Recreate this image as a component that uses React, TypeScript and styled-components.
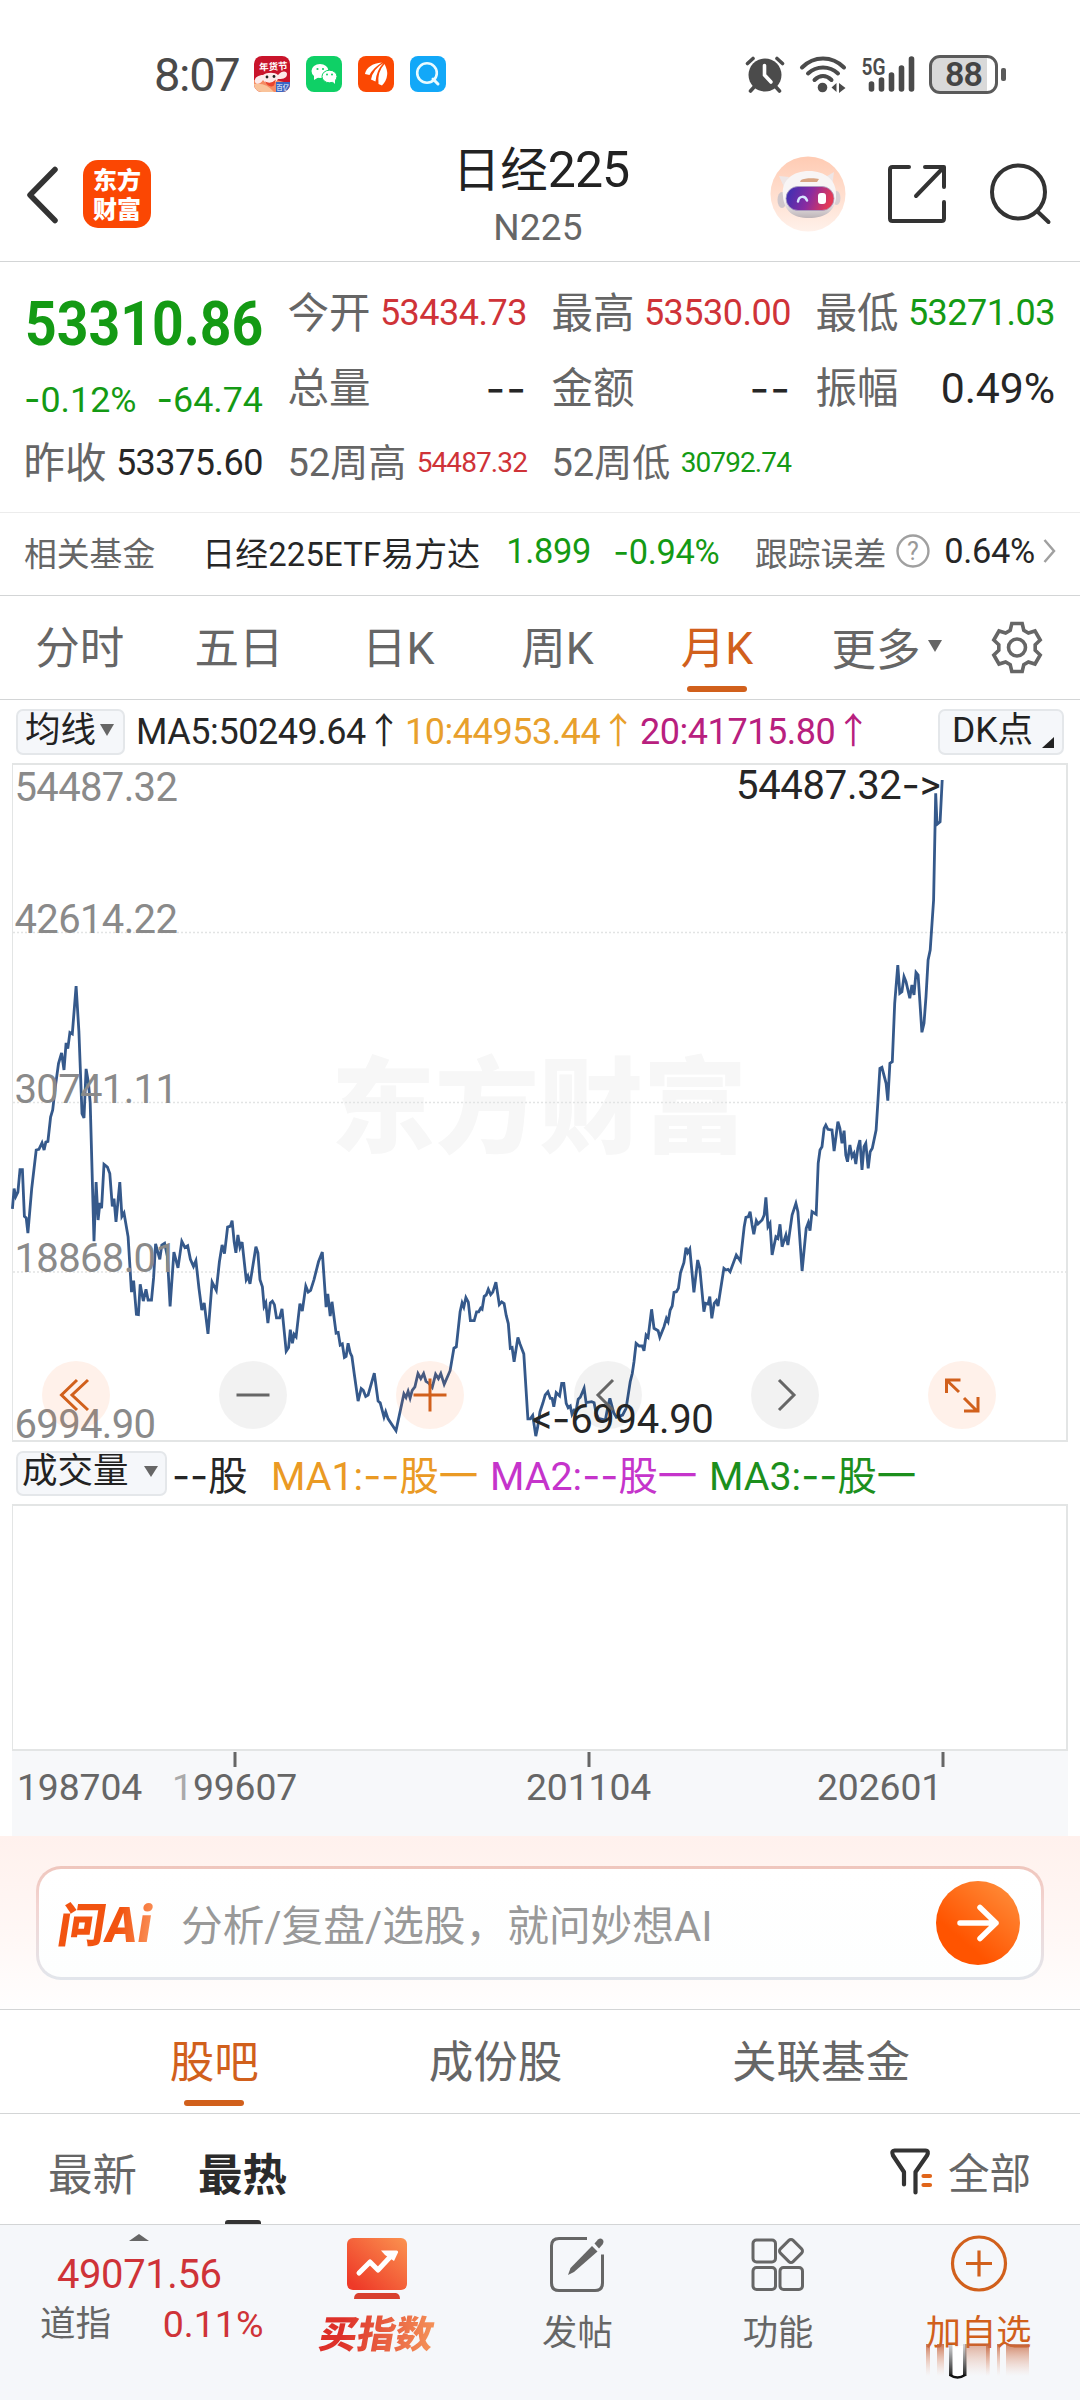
import React from 'react';
import styled, { createGlobalStyle } from 'styled-components';

const sans = `Roboto, 'Noto Sans CJK SC', sans-serif`;
const cjk = `'Noto Sans CJK SC', sans-serif`;

const C = {
  green: '#149a14',
  red: '#cf3338',
  orange: '#d1601c',
  ink: '#262626',
  grey: '#666666',
  line: '#d3d5d6',
};

const Global = createGlobalStyle`
  * { box-sizing: border-box; }
  body { margin: 0; background: #fff; font-family: ${sans}; color: ${C.ink}; }
`;

const Screen = styled.main`
  width: 1080px;
  height: 2400px;
  display: flex;
  flex-direction: column;
  overflow: hidden;
  background: #fff;
  white-space: nowrap;
`;

const Dash = styled.span`
  font-family: Inter, sans-serif;
`;

function Num({ children }: { children: string }) {
  return (
    <>
      {children.split(/(-+)/).map((part, i) => (part.startsWith('-') ? <Dash key={i}>{part}</Dash> : part))}
    </>
  );
}

/* ---------- status bar ---------- */

const StatusBar = styled.div`
  height: 148px;
  padding: 0 74px 0 154px;
  display: flex;
  align-items: center;
  justify-content: space-between;
`;

const StatusGroup = styled.div<{ $gap: number }>`
  display: flex;
  align-items: center;
  gap: ${(p) => p.$gap}px;
`;

const Clock = styled.span`
  width: 84px;
  font-size: 47px;
  line-height: 47px;
  letter-spacing: -1.3px;
  color: #4a4a4a;
`;

const AppTile = styled.svg`
  width: 36px;
  height: 36px;
  border-radius: 8px;
  display: block;
`;

const Battery = styled.div`
  position: relative;
  width: 69px;
  height: 39px;
  margin-right: 8px;
  border: 3px solid #5a5a5a;
  border-radius: 11px;
  background: linear-gradient(90deg, #d9d9d9 88%, #fff 88%);
  display: flex;
  align-items: center;
  justify-content: center;
  font-size: 34px;
  line-height: 33px;
  font-weight: 600;
  letter-spacing: -1px;
  color: #444;
  &::after {
    content: '';
    position: absolute;
    right: -11px;
    top: 10px;
    width: 5px;
    height: 13px;
    border-radius: 2px;
    background: #5a5a5a;
  }
`;

/* ---------- header ---------- */

const Header = styled.header`
  height: 114px;
  border-bottom: 1px solid ${C.line};
  display: grid;
  grid-template-columns: 400px 280px 400px;
`;

const HeaderLeft = styled.div`
  display: flex;
  padding: 12px 0 0 26px;
  gap: 24px;
`;

const BrandTile = styled.div`
  width: 68px;
  height: 68px;
  border-radius: 15px;
  background: #fb4703;
  color: #fff;
  font: 900 24px/29px ${cjk};
  text-align: center;
  padding-top: 4px;
  white-space: pre-line;
`;

const TitleBlock = styled.div`
  display: flex;
  flex-direction: column;
  align-items: center;
`;

const Title = styled.h1`
  margin: -9px 0 0 2px;
  font-size: 47.5px;
  font-weight: 400;
  line-height: 62px;
  color: #222;
`;

const TitleDigits = styled.span`
  font-size: 50px;
  letter-spacing: -1px;
`;

const Subtitle = styled.div`
  margin: 4px 4px 0 0;
  font-size: 37px;
  line-height: 44px;
  letter-spacing: 0.2px;
  color: ${C.grey};
`;

const HeaderRight = styled.div`
  display: flex;
  align-items: flex-start;
  justify-content: flex-end;
  padding: 8px 28px 0 0;
`;

/* ---------- quote ---------- */

const Quote = styled.section`
  height: 251px;
  padding: 12px 24px 0 25px;
  border-bottom: 1px solid #ececec;
  display: grid;
  grid-template-columns: repeat(4, 238px);
  grid-template-rows: repeat(3, 75px);
  column-gap: 26px;
`;

const PriceCell = styled.div`
  grid-row: span 2;
  display: flex;
  flex-direction: column;
  color: ${C.green};
`;

const Price = styled.div`
  margin-top: 13px;
  height: 73px;
  font-size: 62px;
  line-height: 73px;
  font-weight: 700;
  transform: scaleX(0.892);
  transform-origin: 0 50%;
`;

const ChangeRow = styled.div`
  margin: 19px 0 0 -1px;
  display: flex;
  justify-content: space-between;
  font-size: 35.8px;
  line-height: 41px;
`;

const StatCell = styled.div`
  display: flex;
  align-items: center;
  justify-content: space-between;
`;

const StatLabel = styled.span<{ $size?: number }>`
  margin: -4px 0 0 -1.5px;
  font-size: ${(p) => p.$size ?? 41.5}px;
  color: ${C.grey};
`;

const StatValue = styled.span<{ $size?: number; $color?: string; $ls?: number }>`
  margin-top: 2px;
  font-size: ${(p) => p.$size ?? 36}px;
  letter-spacing: ${(p) => p.$ls ?? -0.5}px;
  color: ${(p) => p.$color ?? C.ink};
`;

/* ---------- related fund ---------- */

const FundRow = styled.section`
  height: 83px;
  padding: 0 24px 6px 24px;
  border-bottom: 1px solid ${C.line};
  display: flex;
  align-items: center;
  font-size: 32.8px;
  color: ${C.ink};
`;

const FundLabel = styled.span`
  color: ${C.grey};
`;

const FundName = styled.span`
  margin-left: 47px;
  width: 276px;
  letter-spacing: 0.2px;
`;

const FundNum = styled.span<{ $w: number; $color?: string; $ml: number }>`
  width: ${(p) => p.$w}px;
  margin-left: ${(p) => p.$ml}px;
  font-size: 34.4px;
  letter-spacing: -0.3px;
  color: ${(p) => p.$color ?? C.ink};
`;

/* ---------- period tabs ---------- */

const PeriodBar = styled.nav`
  height: 104px;
  border-bottom: 1px solid ${C.line};
  display: flex;
`;

const PeriodTab = styled.div<{ $active?: boolean }>`
  width: 159.3px;
  display: flex;
  flex-direction: column;
  align-items: center;
  font-size: 44.5px;
  line-height: 52px;
  padding-top: 27px;
  color: ${(p) => (p.$active ? C.orange : C.grey)};
  &::after {
    content: '';
    width: 60px;
    height: 6px;
    margin-top: 11px;
    border-radius: 3px;
    background: ${(p) => (p.$active ? C.orange : 'transparent')};
  }
`;

const MoreTab = styled.div`
  display: flex;
  align-items: center;
  gap: 7px;
  height: 52px;
  margin: 24px 0 0 35px;
  width: 159px;
  font-size: 44.5px;
  color: ${C.grey};
`;

const Caret = styled.i<{ $w: number; $h: number; $up?: boolean }>`
  display: block;
  width: 0;
  height: 0;
  border: solid transparent;
  border-width: ${(p) => (p.$up ? `0 ${p.$w / 2}px ${p.$h}px` : `${p.$h}px ${p.$w / 2}px 0`)};
  border-${(p) => (p.$up ? 'bottom' : 'top')}-color: ${C.grey};
`;

/* ---------- indicator rows ---------- */

const IndicatorRow = styled.div<{ $h: number }>`
  height: ${(p) => p.$h}px;
  padding: 0 16px;
  display: flex;
  align-items: center;
`;

const Chip = styled.div<{ $w: number; $h: number; $pad: number; $gap: number }>`
  width: ${(p) => p.$w}px;
  height: ${(p) => p.$h}px;
  padding-left: ${(p) => p.$pad}px;
  padding-bottom: 3px;
  display: flex;
  align-items: center;
  gap: ${(p) => p.$gap}px;
  border: 2px solid #e4e7ea;
  border-radius: 7px;
  background: #f5f7fa;
  font-size: 35.5px;
  line-height: 39px;
  color: #222;
`;

const Corner = styled.i`
  align-self: flex-end;
  width: 0;
  height: 0;
  margin-bottom: 2px;
  border-left: 12px solid transparent;
  border-bottom: 11px solid #222;
`;

const Average = styled.span<{ $color: string; $ml: number; $w: number }>`
  width: ${(p) => p.$w}px;
  margin-left: ${(p) => p.$ml}px;
  font-size: 36px;
  letter-spacing: -0.45px;
  color: ${(p) => p.$color};
`;

const Up = styled.span`
  font-family: ${cjk};
  line-height: 1;
`;

const Volume = styled.span<{ $color: string; $ml: number; $w: number }>`
  width: ${(p) => p.$w}px;
  margin: -2px 0 0 ${(p) => p.$ml}px;
  font-size: 39.4px;
  color: ${(p) => p.$color};
`;

/* ---------- chart ---------- */

const ChartBox = styled.div`
  position: relative;
  height: 679px;
  margin: 0 12px;
  border: 2px solid #e3e5e5;
  border-left-width: 1px;
`;

const ChartSvg = styled.svg`
  position: absolute;
  left: -13px;
  top: -2px;
  display: block;
  overflow: visible;
  font-family: ${sans};
`;

const ChartTools = styled.div`
  position: absolute;
  left: 29px;
  top: 596px;
  display: flex;
  gap: 109.2px;
`;

const ToolButton = styled.button<{ $warm?: boolean }>`
  width: 68px;
  height: 68px;
  padding: 0;
  border: 0;
  border-radius: 50%;
  background: ${(p) => (p.$warm ? 'rgba(255, 96, 24, 0.09)' : 'rgba(0, 0, 0, 0.05)')};
  svg {
    display: block;
    fill: none;
    stroke: ${(p) => (p.$warm ? C.orange : C.grey)};
    stroke-width: 3;
  }
`;

const VolumeBox = styled.div`
  height: 247px;
  margin: 0 12px;
  border: 2px solid #e3e5e5;
  border-left-width: 1px;
`;

const Axis = styled.div`
  height: 85px;
  margin: 0 12px;
  background: #f7f8fa;
  svg { display: block; }
`;

/* ---------- AI prompt ---------- */

const AskSection = styled.section`
  height: 174px;
  padding: 30px 36px 0;
  border-bottom: 1px solid ${C.line};
  background: linear-gradient(180deg, #fff1ed 0%, #fff8f6 60%, #fffefe 100%);
`;

const AskBox = styled.div`
  height: 114px;
  padding: 0 21px 0 20px;
  display: flex;
  align-items: center;
  border: 3px solid transparent;
  border-radius: 25px;
  background:
    linear-gradient(#fff, #fdfefe) padding-box,
    linear-gradient(180deg, #efc6bd 0%, #f3d5d2 35%, #e2e6ec 100%) border-box;
`;

const AskLogo = styled.div`
  width: 100px;
  height: 52px;
  margin-right: 22px;
  font: 900 47px/50px ${cjk};
  letter-spacing: 0.5px;
  color: transparent;
  background: linear-gradient(90deg, #f25310 60%, #fb9a63);
  background-clip: text;
  -webkit-background-clip: text;
  transform: skewX(-9deg);
`;

const AskHint = styled.span`
  flex: 1;
  font-size: 41.7px;
  color: #999;
`;

const AskSend = styled.svg`
  display: block;
`;

/* ---------- content tabs ---------- */

const ContentTabs = styled.nav`
  height: 104px;
  border-bottom: 1px solid ${C.line};
  display: flex;
  justify-content: space-evenly;
`;

const ContentTab = styled(PeriodTab)`
  width: auto;
`;

const SortBar = styled.div`
  height: 111px;
  padding: 0 49px 0 48px;
  border-bottom: 1px solid ${C.line};
  display: flex;
`;

const SortTab = styled.div<{ $active?: boolean }>`
  margin-right: 61px;
  height: 110px;
  overflow: hidden;
  display: flex;
  flex-direction: column;
  align-items: center;
  padding-top: 36px;
  font-size: 44.5px;
  line-height: 52px;
  font-weight: ${(p) => (p.$active ? 700 : 400)};
  color: ${(p) => (p.$active ? '#2b2b2b' : C.grey)};
  &::after {
    content: '';
    flex: none;
    width: 36px;
    height: 8px;
    margin-top: 18px;
    border-radius: 3px;
    background: ${(p) => (p.$active ? '#333' : 'transparent')};
  }
`;

const Filter = styled.div`
  margin-left: auto;
  height: 110px;
  padding-top: 4px;
  display: flex;
  align-items: center;
  gap: 15px;
  font-size: 41.5px;
  color: ${C.grey};
`;

/* ---------- bottom bar ---------- */

const BottomBar = styled.footer`
  flex: 1;
  background: #f5f7fa;
  display: grid;
  grid-template-columns: 276.5px repeat(4, 200.6px);
`;

const IndexCell = styled.div`
  padding: 9px 13px 0 40px;
  display: flex;
  flex-direction: column;
  align-items: center;
  color: ${C.red};
`;

const IndexCaret = styled(Caret)`
  margin-right: 26px;
`;

const IndexValue = styled.div`
  margin: 10px 25px 0 0;
  font-size: 40px;
  line-height: 47px;
  letter-spacing: -0.4px;
`;

const IndexRow = styled.div`
  align-self: stretch;
  margin-top: 2px;
  display: flex;
  align-items: center;
  justify-content: space-between;
  font-size: 37.6px;
  line-height: 48px;
`;

const IndexName = styled.span`
  font-size: 35.5px;
  color: ${C.grey};
`;

const Action = styled.div<{ $active?: boolean }>`
  padding-top: 10px;
  display: flex;
  flex-direction: column;
  align-items: center;
  font-size: 35.3px;
  line-height: 42px;
  color: ${(p) => (p.$active ? C.orange : C.grey)};
  position: relative;
  svg { display: block; flex: none; }
`;

const ActionText = styled.span`
  margin-top: 15px;
`;

const BuyText = styled.span`
  margin-top: 9px;
  padding: 0 3px;
  font: 900 38px/44px ${cjk};
  color: transparent;
  background: linear-gradient(90deg, #dd3029 20%, #f5955a 100%);
  background-clip: text;
  -webkit-background-clip: text;
  transform: skewX(-10deg);
`;

const Smear = styled.svg`
  position: absolute;
  left: 20px;
  top: 119px;
`;

/* ---------- chart data ---------- */

type Seg = { ox: number; oy: number; sy: number; pts: string };

const SEGMENTS: Seg[] = [
  {
    ox: 0,
    oy: 960,
    sy: 2.8,
    pts: '36,697 41,640 46,662 52,650 58,587 65,587 71,718 76,722 81,765 92,640 105,532 113,530 122,512 128,532 133,510 139,508 147,440 153,420 160,360 170,290 179,260 186,308 192,232 197,248 203,203 210,207 221,73 229,200 238,430 244,442 250,305 257,345 262,400 273,787 279,622 285,728 290,680 295,695 302,572 312,580 319,598 326,690 331,668 337,733 348,622 354,718 360,708 372,775 382,930 388,898 396,992 402,993 407,908 416,955 424,922 430,952 440,952 446,890 452,795 464,838 470,798 478,793 486,830 494,970 505,818 517,862 528,788 537,805 545,800 553,838 562,858 569,842 578,920 586,980 593,960 604,1047 616,902 628,925 637,845 645,798 652,822 661,748 669,745 674,730 680,790 685,820 691,770 697,805 703,790 715,895 720,885 726,907 743,803 749,820 755,895 762,915 767,970 772,960 778,1017 785,960 791,955 797,965 803,1002 812,1002 819,977 831,1095 838,1085 843,1035 849,1073 854,1048 860,1055 871,962 878,983 888,913 895,930 902,925 912,895 925,845 936,818 947,972 952,935 959,997 964,957 976,1045 982,1043 988,1078 994,1075 1000,1113 1005,1110 1011,1073 1017,1100 1022,1110 1029,1160 1040,1235 1049,1200 1055,1205 1062,1222 1069,1218 1087,1157 1098,1235 1104,1240 1115,1280 1120,1265 1127,1285 1150,1318 1173,1215 1179,1225 1185,1208 1191,1227 1197,1205 1205,1195 1214,1158 1222,1172 1230,1158 1237,1180 1245,1185 1255,1197 1265,1160 1273,1172 1280,1158 1290,1188 1307,1150 1318,1087 1325,1083 1336,985 1342,960 1347,972 1353,945 1360,958 1366,1010 1377,1010 1384,985 1390,985 1396,975 1400,978 1406,942 1412,938 1418,922 1425,937 1431,930 1440,902 1450,965 1457,957 1464,962 1470,995 1476,1018 1482,1087 1487,1085 1493,1125 1504,1057 1510,1075 1516,1090 1521,1103 1533,1285 1540,1285 1547,1275 1556,1333 1561,1310',
  },
  {
    ox: 540,
    oy: 1060,
    sy: 3,
    pts: '0,1055 8,1030 15,1005 23,995 30,1015 35,1015 40,1040 47,998 57,1008 63,970 69,970 76,1030 82,1043 88,1038 93,1063 99,1050 105,1050 111,1018 117,1012 128,985 134,1028 150,1025 157,1028 163,1060 170,1075 190,1080 197,1040 203,1015 214,1058 222,1072 240,1065 250,1045 262,965 268,940 273,905 279,850 288,858 297,858 302,872 308,825 314,832 324,748 331,805 343,812 348,832 360,800 367,775 372,785 378,750 384,738 389,697 396,695 402,685 408,638 418,608 424,563 429,578 435,567 447,697 458,600 464,625 476,755 481,730 488,732 493,710 499,775 506,730 512,722 517,738 534,625 540,630 546,628 552,635 570,585 582,603 593,500 598,472 605,470 610,455 616,495 621,523 628,482 633,492 645,480 651,465 656,412 662,500 668,490 674,585 685,530 691,535 697,493 703,560 714,525 720,555 732,465 743,430 749,455 761,633 773,505 779,488 784,512 790,455 802,463 808,310 813,270 819,260 825,205 830,195 836,208 848,210 854,273 865,185 871,205 877,250 883,212 888,285 893,305 900,255 906,290 912,280 917,312 923,265 929,240 935,330 941,260 946,250 953,325 959,275 965,265 976,210 981,130 987,25 993,22 1005,70 1010,122 1016,10 1023,5',
  },
  {
    ox: 540,
    oy: 590,
    sy: 3,
    pts: '1030,1240 1039,1125 1045,1210 1051,1205 1057,1160 1063,1175 1074,1225 1080,1185 1086,1215 1092,1147 1098,1155 1109,1327 1115,1300 1121,1220 1127,1110 1133,1080 1143,930 1149,610 1153,703 1162,695 1168,570',
  },
];

const CHART_TOP = 763;
const linePoints = SEGMENTS.map((s) =>
  s.pts
    .split(' ')
    .map((p) => {
      const [x, y] = p.split(',').map(Number);
      return `${(s.ox + x / 2.904).toFixed(1)},${(s.oy + y / s.sy - CHART_TOP).toFixed(1)}`;
    })
    .join(' '),
).join(' ');

const LEVELS: [string, number][] = [
  ['54487.32', 38],
  ['42614.22', 169.5],
  ['30741.11', 340],
  ['18868.01', 509],
  ['6994.90', 674.5],
];

const DATES: [string, number][] = [
  ['198704', 5],
  ['201104', 514],
  ['202601', 805],
];

const STATS: { label: string; value: string; color?: string; size?: number; ls?: number; labelSize?: number }[] = [
  { label: '今开', value: '53434.73', color: C.red },
  { label: '最高', value: '53530.00', color: C.red },
  { label: '最低', value: '53271.03', color: C.green },
  { label: '总量', value: '--', size: 43, ls: 1 },
  { label: '金额', value: '--', size: 43, ls: 1 },
  { label: '振幅', value: '0.49%', size: 42.8, ls: -0.1 },
  { label: '昨收', value: '53375.60' },
  { label: '52周高', value: '54487.32', color: C.red, size: 28, ls: -0.9, labelSize: 38 },
  { label: '52周低', value: '30792.74', color: C.green, size: 28, ls: -0.9, labelSize: 38 },
];

/* ---------- icons ---------- */

const BackIcon = () => (
  <svg width="33" height="68" viewBox="0 0 33 68" fill="none" stroke="#333" strokeWidth="5.500" strokeLinecap="round" strokeLinejoin="round">
    <path d="M29 9.500 4 35l25 25.500" />
  </svg>
);

const RobotIcon = () => (
  <svg width="76" height="76" viewBox="0 0 76 76">
    <defs>
      <linearGradient id="halo" x1="0" y1="0" x2="0" y2="1">
        <stop offset="0" stopColor="#ffcbb3" />
        <stop offset="1" stopColor="#fff1ea" />
      </linearGradient>
      <linearGradient id="visor" x1="0" y1="0" x2="1" y2="0.2">
        <stop offset="0" stopColor="#3431b5" />
        <stop offset="0.55" stopColor="#8a2ba0" />
        <stop offset="1" stopColor="#e33a56" />
      </linearGradient>
      <linearGradient id="shell" x1="0" y1="0" x2="0" y2="1">
        <stop offset="0.6" stopColor="#f8f5f5" />
        <stop offset="1" stopColor="#bdb4b8" />
      </linearGradient>
    </defs>
    <circle cx="38" cy="38" r="37.500" fill="url(#halo)" />
    <path d="M9 20l10 1-5 10zM64 16l-10 6 8 8z" fill="#eee6e6" />
    <ellipse cx="12" cy="44" rx="4.500" ry="8" fill="#cfc6ca" />
    <ellipse cx="66.500" cy="42" rx="4" ry="7" fill="#d8cfd2" />
    <path d="M13 40c-2-16 10-25 26-25s28 9 27 25c0 15-11 22-27 22S14 55 13 40z" fill="url(#shell)" />
    <path d="M31 24c3-2 14-2 18-1l-2 3H30z" fill="#d9a583" />
    <rect x="16" y="30.500" width="48" height="24" rx="12" fill="url(#visor)" stroke="#a9a0c0" strokeWidth="0.800" />
    <path d="M28 45.500c1-6 7-6 9-1" fill="none" stroke="#d6e4ff" strokeWidth="2.500" strokeLinecap="round" />
    <rect x="48" y="37" width="8" height="11" rx="3" fill="#fff" />
  </svg>
);

const ShareIcon = () => (
  <svg width="62" height="62" viewBox="0 0 62 62" fill="none" stroke="#333" strokeWidth="4" strokeLinecap="round" strokeLinejoin="round">
    <path d="M22 4H5.500Q3 4 3 6.500v49Q3 58 5.500 58h49q2.500 0 2.500-2.500V39M38 4h19v20M56 5 29 33" />
  </svg>
);

const SearchIcon = () => (
  <svg width="62" height="62" viewBox="0 0 62 62" fill="none" stroke="#333" strokeWidth="4" strokeLinecap="round">
    <circle cx="28.500" cy="29" r="26.500" />
    <path d="M48 49 58.500 59" />
  </svg>
);

const AlarmIcon = () => (
  <svg width="40" height="38" viewBox="0 0 40 38" fill="none" stroke="#4b4b4b" strokeLinecap="round">
    <circle cx="20" cy="20" r="16.500" fill="#4b4b4b" stroke="none" />
    <path d="M2.500 8.500 8 3.500M37.500 8.500 32 3.500M10 31l-4.500 5M30 31l4.500 5" strokeWidth="3.600" />
    <path d="M19.500 10.500V20l6.500 7" stroke="#fff" strokeWidth="3.600" />
  </svg>
);

const WifiIcon = () => (
  <svg width="48" height="38" viewBox="0 0 48 38" fill="none" stroke="#4b4b4b" strokeWidth="4" strokeLinecap="round">
    <path d="M3 12.500Q12 3.500 24 3.500T45 12.500M9 18.500q6.500-6 15-6t15 6M15.500 25q4-4 8.500-4t8.500 4" />
    <circle cx="23.500" cy="32.500" r="4.800" fill="#4b4b4b" stroke="none" />
    <path d="M37.500 28v9l-5-4.500zM40 28l6.500 5-6.500 5z" fill="#4b4b4b" stroke="none" />
  </svg>
);

const SignalSvg = styled.svg`
  display: block;
  overflow: visible;
`;

const SignalIcon = () => (
  <SignalSvg width="54" height="38" viewBox="0 0 54 38" fill="none" stroke="#4b4b4b" strokeWidth="5.600" strokeLinecap="round">
    <text x="0.500" y="19.500" fontSize="24.500" fontWeight="600" fill="#4b4b4b" stroke="none" textLength="24" lengthAdjust="spacingAndGlyphs" fontFamily={sans}>
      5G
    </text>
    <path d="M10.500 34v-5M20.500 34v-9M30.500 34V20M40.500 34V13M50.500 34V4" />
  </SignalSvg>
);

const GearIcon = () => (
  <svg width="54" height="54" viewBox="0 0 54 54" fill="none" stroke={C.grey} strokeWidth="3.600">
    <path d="M21.800 2.500h10.400l1.600 6.800 4.600 2.700 6.600-2 5.200 9-5 4.800v5.400l5 4.800-5.200 9-6.600-2-4.600 2.700-1.600 6.800H21.800l-1.600-6.800-4.600-2.700-6.600 2-5.200-9 5-4.800v-5.400l-5-4.800 5.200-9 6.600 2 4.600-2.700z" />
    <circle cx="27" cy="26.500" r="8.500" />
  </svg>
);

const FilterIcon = () => (
  <svg width="44" height="48" viewBox="0 0 44 48" fill="none" strokeWidth="4.200" strokeLinecap="round" strokeLinejoin="round">
    <path d="M15 37.500V25L4 8.500C2.500 5 3.500 3.500 5.500 3.500h31c2.500 0 3 2 1.500 5L26.500 25v20.500" stroke="#333" />
    <path d="M34.500 29h6.500M34.500 38h6.500" stroke="#e0651a" />
  </svg>
);

const BuyIcon = () => (
  <svg width="60" height="66" viewBox="0 0 60 66">
    <defs>
      <linearGradient id="buy" x1="0" y1="1" x2="1" y2="0">
        <stop offset="0.100" stopColor="#ee3a28" />
        <stop offset="1" stopColor="#fb9350" />
      </linearGradient>
    </defs>
    <rect y="3" width="60" height="52" rx="6" fill="url(#buy)" />
    <path d="M12 38 23 27l8 8 13-14" fill="none" stroke="#fff" strokeWidth="5" strokeLinecap="round" strokeLinejoin="round" />
    <path d="M34 15.500h15.500q2 0 1.500 2L47 26l-9-6z" fill="#fff" />
    <path d="M11 58h38q4 1 4 6H7q0-5 4-6z" fill="#d8402f" />
  </svg>
);

const PostIcon = () => (
  <svg width="56" height="62" viewBox="0 0 56 62" fill="none" stroke={C.grey} strokeWidth="3">
    <path d="M38 3.500H10Q2.500 3.500 2.500 11v37q0 7.500 7.500 7.500h36q7.500 0 7.500-7.500V19.500" />
    <path d="m43 11 5.500 5.500L25 37l-6 3 2.500-7z" fill={C.grey} stroke="none" />
    <path d="m45.500 8.500 3.500-4q2.500-2 4.500 0t0 5l-3.500 4z" fill={C.grey} stroke="none" />
  </svg>
);

const GridIcon = () => (
  <svg width="54" height="62" viewBox="0 0 54 62" fill="none" stroke={C.grey} strokeWidth="3">
    <rect x="2" y="5" width="22.500" height="22" rx="3.500" />
    <rect x="2" y="32.500" width="22.500" height="22" rx="3.500" />
    <rect x="29" y="32.500" width="22.500" height="22" rx="3.500" />
    <rect x="31" y="7" width="18" height="18" rx="3" transform="rotate(45 40 16)" />
  </svg>
);

const AddIcon = () => (
  <svg width="58" height="62" viewBox="0 0 58 62" fill="none" stroke={C.orange} strokeWidth="3.200">
    <circle cx="29" cy="28.500" r="26.500" />
    <path d="M29 15.500v26M16 28.500h26" />
  </svg>
);

/* ---------- small inline drawings ---------- */

const HelpMark = styled.svg`
  margin-left: 10px;
`;

const GearSlot = styled.div`
  padding-top: 25px;
`;

/* ---------- page ---------- */

export default function App() {
  const stat = (s: (typeof STATS)[number]) => (
    <StatCell key={s.label}>
      <StatLabel $size={s.labelSize}>{s.label}</StatLabel>
      <StatValue $size={s.size} $color={s.color} $ls={s.ls}>
        <Num>{s.value}</Num>
      </StatValue>
    </StatCell>
  );

  return (
    <Screen>
      <Global />
      <StatusBar>
        <StatusGroup $gap={16}>
          <Clock>8:07</Clock>
          <AppTile viewBox="0 0 36 36">
            <rect width="36" height="36" fill="#c9142b" />
            <path d="M0 24q14-4 36 4v8H0z" fill="#f58a62" />
            <path d="M0 28q12-2 20 8H0z" fill="#f9c39a" />
            <text x="5" y="14" fontSize="9.500" fontWeight="700" fill="#fff" fontFamily={cjk} transform="rotate(-3 18 10)">年货节</text>
            <path d="M1 26c-1-5 4-7 8-7 4-3 12-3 15 0 4-5 9-4 9-1 0 5-6 5-9 5-3 6-12 6-15 1-2 4-7 5-8 2z" fill="#fdeaea" />
            <circle cx="13" cy="21" r="1.400" fill="#222" /><circle cx="20" cy="20.500" r="1.400" fill="#222" />
            <path d="M11 25.500q6 3 11-2l-2 6q-5 3-9-4z" fill="#e8452f" />
            <rect x="22" y="26" width="14" height="10" fill="#3a66c4" />
            <text x="22.300" y="34" fontSize="6.500" fill="#fff" fontFamily={cjk}>百亿</text>
          </AppTile>
          <AppTile viewBox="0 0 36 36">
            <rect width="36" height="36" fill="#0fd066" />
            <ellipse cx="14" cy="15" rx="8.500" ry="7" fill="#fff" /><path d="M8 19v5l5-3z" fill="#fff" />
            <ellipse cx="23.500" cy="20.500" rx="7.500" ry="6.300" fill="#fff" stroke="#0fd066" strokeWidth="1" /><path d="m26 25 3 3v-5z" fill="#fff" />
            <g fill="#0fd066"><circle cx="11.500" cy="13" r="1.100" /><circle cx="17" cy="13" r="1.100" /><circle cx="21" cy="18.500" r="1" /><circle cx="26" cy="18.500" r="1" /></g>
          </AppTile>
          <AppTile viewBox="0 0 36 36">
            <rect width="36" height="36" fill="#fb4803" />
            <g fill="#fff">
              <path d="M24 6.500Q9 8 7 18l4.500 1Q15 12 24 6.500z" />
              <path d="M25.500 7Q15 13 13 23.500l4.500 2Q18.500 14 25.500 7z" />
              <path d="M26.500 8Q19 16 20.500 28l3.500 1.500Q33 20 26.500 8z" />
            </g>
          </AppTile>
          <AppTile viewBox="0 0 36 36">
            <rect width="36" height="36" fill="#12a8f8" />
            <circle cx="17" cy="17" r="9.800" fill="none" stroke="#e9fbff" strokeWidth="2.600" />
            <path d="m23 23 5 5" stroke="#e9fbff" strokeWidth="3" strokeLinecap="round" />
          </AppTile>
        </StatusGroup>
        <StatusGroup $gap={14}>
          <AlarmIcon />
          <WifiIcon />
          <SignalIcon />
          <Battery>88</Battery>
        </StatusGroup>
      </StatusBar>

      <Header>
        <HeaderLeft>
          <BackIcon />
          <BrandTile>{'东方\n财富'}</BrandTile>
        </HeaderLeft>
        <TitleBlock>
          <Title>日经<TitleDigits>225</TitleDigits></Title>
          <Subtitle>N225</Subtitle>
        </TitleBlock>
        <HeaderRight>
          <StatusGroup $gap={41}>
            <RobotIcon />
            <ShareIcon />
            <SearchIcon />
          </StatusGroup>
        </HeaderRight>
      </Header>

      <Quote>
        <PriceCell>
          <Price>53310.86</Price>
          <ChangeRow>
            <span><Num>-0.12%</Num></span>
            <span><Num>-64.74</Num></span>
          </ChangeRow>
        </PriceCell>
        {STATS.map(stat)}
      </Quote>

      <FundRow>
        <FundLabel>相关基金</FundLabel>
        <FundName>日经225ETF易方达</FundName>
        <FundNum $ml={28} $w={81} $color={C.green}>1.899</FundNum>
        <FundNum $ml={26} $w={142} $color={C.green}><Num>-0.94%</Num></FundNum>
        <FundLabel>跟踪误差</FundLabel>
        <HelpMark width="34" height="34" viewBox="0 0 34 34">
          <circle cx="17" cy="17" r="15.500" fill="none" stroke="#a0a0a0" strokeWidth="2.400" />
          <text x="17" y="26" fontSize="25" textAnchor="middle" fill="#999" fontFamily={sans}>?</text>
        </HelpMark>
        <FundNum $ml={14} $w={99}>0.64%</FundNum>
        <svg width="13" height="26" viewBox="0 0 13 26" fill="none" stroke="#a0a0a0" strokeWidth="2.500"><path d="m1.500 2 9.500 11-9.500 11" /></svg>
      </FundRow>

      <PeriodBar>
        <PeriodTab>分时</PeriodTab>
        <PeriodTab>五日</PeriodTab>
        <PeriodTab>日K</PeriodTab>
        <PeriodTab>周K</PeriodTab>
        <PeriodTab $active>月K</PeriodTab>
        <MoreTab>更多<Caret $w={15} $h={12} /></MoreTab>
        <GearSlot><GearIcon /></GearSlot>
      </PeriodBar>

      <IndicatorRow $h={63}>
        <Chip $w={109} $h={46} $pad={7} $gap={4}>均线<Caret $w={15} $h={12} /></Chip>
        <Average $ml={11} $w={269} $color={C.ink}>MA5:50249.64<Up>↑</Up></Average>
        <Average $ml={0} $w={235} $color="#e8a02c">10:44953.44<Up>↑</Up></Average>
        <Average $ml={0} $w={298} $color="#b8207e">20:41715.80<Up>↑</Up></Average>
        <Chip $w={126} $h={46} $pad={12} $gap={9}>DK点<Corner /></Chip>
      </IndicatorRow>

      <ChartBox>
        <ChartSvg width="1080" height="679" viewBox="0 0 1080 679">
          <text x="331" y="382" fontSize="104" fontWeight="900" fill="#f7f7f7" fontFamily={cjk}>东方财富</text>
          <g stroke="#e2e4e4" strokeWidth="1.500" strokeDasharray="2 2">
            <path d="M13 169.500H1067M13 339.500H1067M13 509H1067" />
          </g>
          <polyline points={linePoints} fill="none" stroke="#35598b" strokeWidth="2.800" strokeLinejoin="miter" />
          <g fontSize="40" fill="#8a8a8a" letterSpacing="-0.650">
            {LEVELS.map(([text, y]) => (
              <text key={text} x="14.500" y={y}>{text}</text>
            ))}
          </g>
          <g fontSize="40" fill={C.ink} letterSpacing="-0.300">
            <text x="736" y="36">54487.32<tspan fontFamily="Inter">-</tspan>&gt;</text>
            <text x="532" y="670">&lt;<tspan fontFamily="Inter">-</tspan>6994.90</text>
          </g>
        </ChartSvg>
        <ChartTools>
          <ToolButton $warm>
            <svg width="68" height="68"><path d="M35 19 19.500 34 35 49M46 19 30 34 46 49" /></svg>
          </ToolButton>
          <ToolButton>
            <svg width="68" height="68"><path d="M17.500 34h33" /></svg>
          </ToolButton>
          <ToolButton $warm>
            <svg width="68" height="68"><path d="M17.500 34h33M34 17.500v33" /></svg>
          </ToolButton>
          <ToolButton>
            <svg width="68" height="68"><path d="M39 19 24 34l15 15" /></svg>
          </ToolButton>
          <ToolButton>
            <svg width="68" height="68"><path d="m28 19 15 15-15 15" /></svg>
          </ToolButton>
          <ToolButton $warm>
            <svg width="68" height="68"><path d="M18.500 32V19h14M19 19.500 31 31M36 37l13 13M50 36v14H36" /></svg>
          </ToolButton>
        </ChartTools>
      </ChartBox>

      <IndicatorRow $h={62}>
        <Chip $w={151} $h={45} $pad={4} $gap={15}>成交量<Caret $w={14} $h={11} /></Chip>
        <Volume $ml={5} $w={99} $color={C.ink}><Num>--股</Num></Volume>
        <Volume $ml={0} $w={219} $color="#ea9a24"><Num>MA1:--股一</Num></Volume>
        <Volume $ml={0} $w={219} $color="#c534cb"><Num>MA2:--股一</Num></Volume>
        <Volume $ml={0} $w={219} $color="#1c8f1c"><Num>MA3:--股一</Num></Volume>
      </IndicatorRow>

      <VolumeBox />
      <Axis>
        <svg width="1056" height="85" fontFamily="Roboto" fontSize="37.300" letterSpacing="-0.100" fill={C.grey}>
          <path d="M223 1v15M577 1v15M931 1v15" stroke={C.grey} strokeWidth="3" />
          {DATES.map(([text, x]) => (
            <text key={text} x={x} y="49">{text}</text>
          ))}
          <text x="160" y="49"><tspan fill="#aaa">1</tspan>99607</text>
        </svg>
      </Axis>

      <AskSection>
        <AskBox>
          <AskLogo>问Ai</AskLogo>
          <AskHint>分析/复盘/选股，就问妙想AI</AskHint>
          <AskSend width="84" height="84" viewBox="0 0 84 84">
            <defs>
              <linearGradient id="send" x1="0.300" y1="0.700" x2="0.900" y2="0">
                <stop offset="0" stopColor="#ff5400" />
                <stop offset="1" stopColor="#ff8f3c" />
              </linearGradient>
            </defs>
            <circle cx="42" cy="42" r="42" fill="url(#send)" />
            <path d="M24 42h36M44 26.500 60 42 44 57.500" fill="none" stroke="#fff" strokeWidth="5.500" strokeLinecap="round" strokeLinejoin="round" />
          </AskSend>
        </AskBox>
      </AskSection>

      <ContentTabs>
        <ContentTab $active>股吧</ContentTab>
        <ContentTab>成份股</ContentTab>
        <ContentTab>关联基金</ContentTab>
      </ContentTabs>

      <SortBar>
        <SortTab>最新</SortTab>
        <SortTab $active>最热</SortTab>
        <Filter>
          <FilterIcon />
          全部
        </Filter>
      </SortBar>

      <BottomBar>
        <IndexCell>
          <IndexCaret $up $w={21} $h={7} />
          <IndexValue>49071.56</IndexValue>
          <IndexRow><IndexName>道指</IndexName>0.11%</IndexRow>
        </IndexCell>
        <Action><BuyIcon /><BuyText>买指数</BuyText></Action>
        <Action><PostIcon /><ActionText>发帖</ActionText></Action>
        <Action><GridIcon /><ActionText>功能</ActionText></Action>
        <Action $active>
          <AddIcon />
          <ActionText>加自选</ActionText>
          <Smear width="160" height="36" viewBox="0 0 160 36">
            <defs>
              <linearGradient id="fade" x1="0" y1="0" x2="0" y2="1">
                <stop offset="0" stopColor="#c4623a" stopOpacity="0.850" />
                <stop offset="1" stopColor="#f0b8a0" stopOpacity="0" />
              </linearGradient>
              <linearGradient id="fadeDark" x1="0" y1="0" x2="0" y2="1">
                <stop offset="0" stopColor="#444" stopOpacity="0.200" />
                <stop offset="1" stopColor="#111" stopOpacity="0.950" />
              </linearGradient>
            </defs>
            <g fill="url(#fade)">
              <rect x="28" y="0" width="4" height="32" />
              <rect x="39" y="0" width="7" height="32" />
              <rect x="67" y="0" width="24" height="32" opacity="0.600" />
              <rect x="88" y="0" width="4" height="32" />
              <rect x="99" y="0" width="3" height="32" />
              <rect x="108" y="0" width="23" height="32" opacity="0.900" />
            </g>
            <rect x="54" y="2" width="12" height="30" fill="#fff" opacity="0.850" />
            <rect x="51" y="0" width="3.500" height="32" fill="url(#fadeDark)" />
            <rect x="65" y="0" width="3.500" height="32" fill="url(#fadeDark)" />
            <path d="M52 31q7.500 5 15 0" fill="none" stroke="#111" strokeWidth="2.500" />
          </Smear>
        </Action>
      </BottomBar>
    </Screen>
  );
}
